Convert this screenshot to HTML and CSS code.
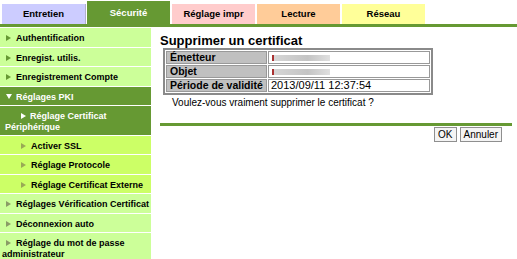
FILE: index.html
```html
<!DOCTYPE html>
<html lang="fr">
<head>
<meta charset="utf-8">
<link rel="stylesheet" href="styles.css">
</head>
<body>
<div class="tabs">
  <div class="tab t-maint">Entretien</div>
  <div class="tab t-sec">Sécurité</div>
  <div class="tab t-print">Réglage impr</div>
  <div class="tab t-read">Lecture</div>
  <div class="tab t-net">Réseau</div>
</div>
<div class="main">
  <ul class="menu">
    <li class="item top"><div class="lbl"><span class="arr"></span>Authentification</div></li>
    <li class="item top"><div class="lbl"><span class="arr"></span>Enregist. utilis.</div></li>
    <li class="item top"><div class="lbl"><span class="arr"></span>Enregistrement Compte</div></li>
    <li class="item open"><div class="lbl"><span class="arr down"></span>Réglages PKI</div></li>
    <li class="item open sub1"><div class="lbl"><span class="arr"></span>Réglage Certificat Périphérique</div></li>
    <li class="item sub2"><div class="lbl"><span class="arr"></span>Activer SSL</div></li>
    <li class="item sub2"><div class="lbl"><span class="arr"></span>Réglage Protocole</div></li>
    <li class="item sub2"><div class="lbl"><span class="arr"></span>Réglage Certificat Externe</div></li>
    <li class="item lite"><div class="lbl"><span class="arr"></span>Réglages Vérification Certificat</div></li>
    <li class="item lite"><div class="lbl"><span class="arr"></span>Déconnexion auto</div></li>
    <li class="item lite two"><div class="lbl"><span class="arr"></span>Réglage du mot de passe administrateur</div></li>
  </ul>
  <div class="content">
    <h1 class="title">Supprimer un certificat</h1>
    <table class="cert">
      <tr><th>Émetteur</th><td><span class="blur"></span></td></tr>
      <tr><th>Objet</th><td><span class="blur"></span></td></tr>
      <tr><th>Période de validité</th><td class="date">2013/09/11 12:37:54</td></tr>
    </table>
    <p class="question">Voulez-vous vraiment supprimer le certificat ?</p>
    <div class="rule"></div>
    <div class="buttons">
      <button class="btn">OK</button>
      <button class="btn">Annuler</button>
    </div>
  </div>
</div>
</body>
</html>
```
FILE: styles.css
```css
* { box-sizing: border-box; }
html, body { margin: 0; padding: 0; background: #fff; }
body { font-family: "Liberation Sans", Arial, sans-serif; font-size: 10px; color: #000; width: 517px; height: 259px; overflow: hidden; }

.tabs { display: flex; align-items: flex-end; gap: 2px; padding-left: 2px; height: 27px; border-bottom: 3px solid #669933; }
.tab { width: 83px; height: 20px; display: flex; align-items: center; justify-content: center; font-weight: bold; font-size: 9.5px; padding-bottom: 1px; }
.t-maint { background: #ccccff; box-shadow: 1px 0 0 #b0b0c8; }
.t-sec { background: #669933; color: #fff; height: 23px; padding-bottom: 0; }
.t-print { background: #ffcccc; }
.t-read { background: #ffcc99; }
.t-net { background: #ffff99; }

.main { display: flex; padding-top: 1px; }
.menu { list-style: none; margin: 0; padding: 0; width: 151px; flex: none; }
.item { background: #ccff99; height: 18.5px; margin-bottom: 1px; display: flex; align-items: center; font-weight: bold; font-size: 9px; line-height: 11px; padding: 3px 0 0 2px; }
.lbl { text-indent: 4px; }
.arr { display: inline-block; width: 0; height: 0; border-left: 5px solid #669933; border-top: 3px solid transparent; border-bottom: 3px solid transparent; margin-right: 5px; vertical-align: 0; text-indent: 0; }
.item.open { background: #669933; color: #fff; }
.item.open .arr { border-left-color: #fff; }
.item.open .arr.down { border-left: 3px solid transparent; border-right: 3px solid transparent; border-top: 5px solid #fff; border-bottom: 0; margin-right: 4px; vertical-align: 1px; }
.item.sub1 { height: 28.5px; padding-left: 5px; }
.item.sub1 .lbl { text-indent: 16px; }
.item.sub1 .arr { margin-right: 4px; }
.item.sub2 { background: #ccff66; padding-left: 21px; }
.item.sub2 .lbl { text-indent: 0; }
.item.sub2 .arr { border-left-color: #99aa55; }
.item.lite .arr { border-left-color: #8a9c66; }
.item.two { height: 28.5px; }

.content { flex: 1; padding: 5px 5px 0 9px; }
.title { margin: 0; font-size: 13px; font-weight: bold; line-height: 15px; }
.cert { border: 2px solid #8a8a8a; border-collapse: separate; border-spacing: 1px; margin: 0 0 0 3px; width: 270px; background: #fff; }
.cert th, .cert td { border: 1px solid #999; height: 13px; padding: 0 3px; font-size: 10.5px; line-height: 11px; text-align: left; }
.cert th { background: #c0c0c0; width: 101px; font-weight: bold; }
.cert td { background: #fff; }
.cert td.date { font-size: 11px; padding-left: 2px; }
.blur { display: inline-block; width: 58px; height: 6px; background: linear-gradient(90deg, #d6d6d6, #c4c4c4 60%, #e0e0e0); border-left: 2px solid #a33; vertical-align: middle; }
.question { margin: 1px 0 0 12px; font-size: 10px; line-height: 13px; }
.rule { height: 3px; background: #669933; margin-top: 14px; }
.buttons { display: flex; justify-content: flex-end; gap: 3px; margin-top: 1px; padding-right: 10px; }
.btn { font-family: "Liberation Sans", Arial, sans-serif; font-size: 10px; padding: 0 3px; background: #f4f4f4; border: 1px solid #8f8f8f; height: 15px; line-height: 11px; color: #000; }
```
